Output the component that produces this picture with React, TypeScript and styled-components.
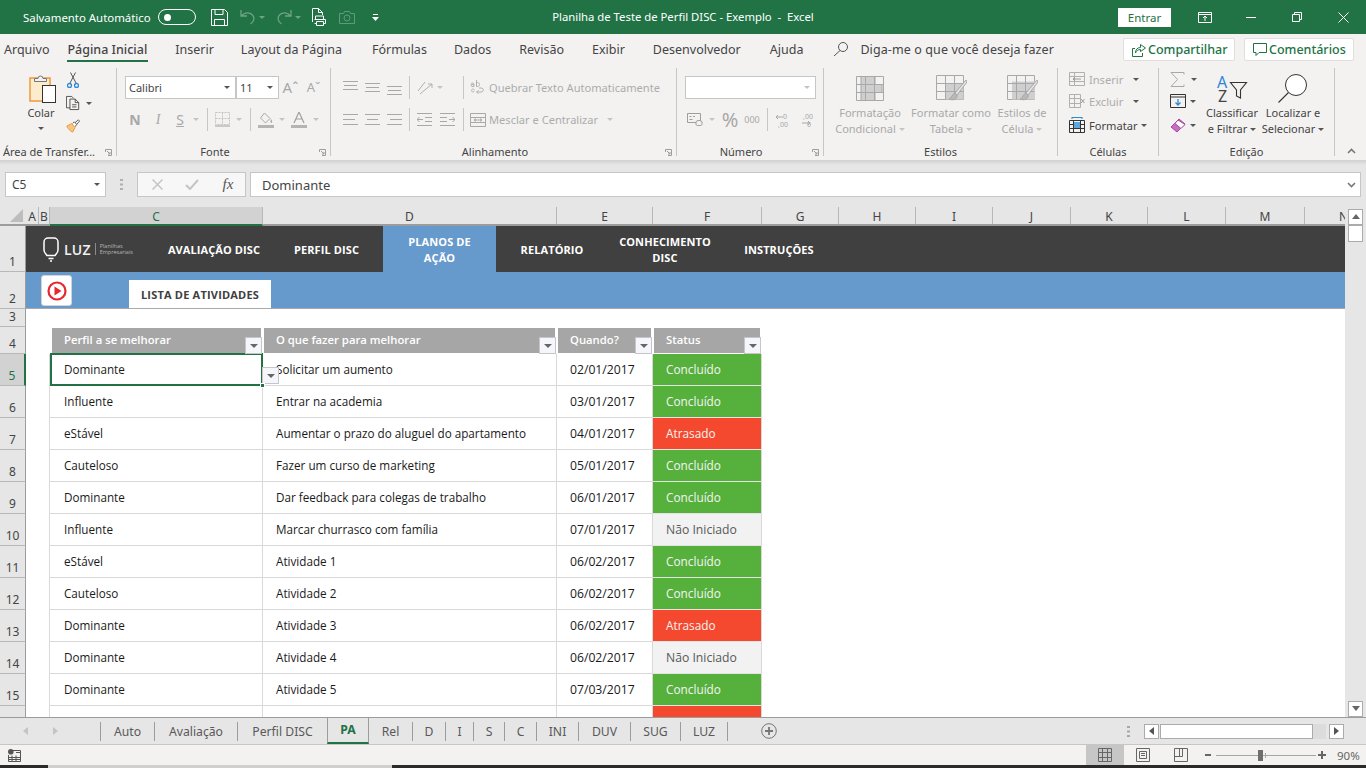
import * as React from "react";
import styled, { createGlobalStyle } from "styled-components";

const GREEN = "#217346";
const INK = "#444444";

const GlobalStyle = createGlobalStyle`
  html, body {
    margin: 0;
    height: 100%;
    overflow: hidden;
    background: #e6e6e6;
  }
  body {
    font-family: "Noto Sans", "Open Sans", sans-serif;
    color: ${INK};
  }
  * { box-sizing: border-box; }
`;

const Window = styled.div`
  width: 1366px;
  height: 768px;
  display: flex;
  flex-direction: column;
  overflow: hidden;
`;

/* title bar */
const TitleBar = styled.header`
  height: 34px;
  flex: none;
  background: ${GREEN};
  color: white;
  display: grid;
  grid-template-columns: 1fr auto 1fr;
  align-items: center;
`;

const QuickAccess = styled.div`
  display: flex;
  align-items: center;
  padding-left: 23px;
`;

const AutoSave = styled.span`
  font-size: 11.4px;
  width: 135px;
  white-space: nowrap;
`;

const Toggle = styled.span`
  width: 38px;
  height: 16px;
  border: 1px solid white;
  border-radius: 8px;
  margin-right: 15px;
  display: flex;
  align-items: center;
  padding-left: 5px;
  &::before {
    content: "";
    width: 7px;
    height: 7px;
    border-radius: 50%;
    background: white;
  }
`;

const Slot = styled.span<{ $w: number; $h?: number; $ml?: number }>`
  width: ${(p) => p.$w}px;
  height: ${(p) => (p.$h ? `${p.$h}px` : "auto")};
  margin-left: ${(p) => p.$ml ?? 0}px;
  flex: none;
  display: inline-flex;
  align-items: center;
  justify-content: center;
`;

const WindowTitle = styled.div`
  font-size: 11.3px;
  white-space: pre;
  position: relative;
  top: -1px;
`;

const WindowControls = styled.div`
  display: flex;
  align-items: center;
  justify-content: flex-end;
`;

const SignIn = styled.button`
  width: 53px;
  height: 19px;
  background: white;
  border: 0;
  padding: 0;
  color: ${GREEN};
  font: 11.5px "Noto Sans", sans-serif;
  margin-right: 18px;
`;

/* tabs */
const TabRow = styled.nav`
  height: 34px;
  flex: none;
  background: #f3f2f1;
  display: flex;
  align-items: center;
  padding-left: 4px;
  font-size: 12.5px;
`;

const RibbonTab = styled.span<{ $active?: boolean; $gap: number }>`
  height: 34px;
  margin-left: ${(p) => p.$gap}px;
  padding-bottom: 4px;
  display: flex;
  align-items: center;
  position: relative;
  white-space: nowrap;
  font-weight: ${(p) => (p.$active ? 500 : 400)};
  &::after {
    content: "";
    display: ${(p) => (p.$active ? "block" : "none")};
    position: absolute;
    left: 0;
    right: -1px;
    top: 26px;
    height: 2px;
    background: ${GREEN};
  }
`;

const TellMe = styled.span`
  height: 34px;
  padding-bottom: 4px;
  display: flex;
  align-items: center;
  margin-left: 30px;
  gap: 11px;
  white-space: nowrap;
  letter-spacing: 0.1px;
`;

const TabActions = styled.div`
  margin-left: auto;
  height: 34px;
  display: flex;
  gap: 9px;
  padding: 4px 12px 0 0;
`;

const ShareButton = styled.span<{ $w: number }>`
  width: ${(p) => p.$w}px;
  height: 23px;
  background: white;
  border: 1px solid #e1dfdd;
  border-radius: 2px;
  color: ${GREEN};
  font-size: 12.5px;
  font-weight: 500;
  display: flex;
  align-items: center;
  padding-left: 8px;
  white-space: nowrap;
`;

/* ribbon */
const Ribbon = styled.section`
  height: 92px;
  flex: none;
  background: #f3f2f1;
  display: flex;
  align-items: flex-start;
  position: relative;
`;

const RibbonShadow = styled.div`
  height: 5px;
  flex: none;
  background: linear-gradient(#d0d0d0, #e6e6e6);
`;

const Group = styled.div<{ $w: number }>`
  width: ${(p) => p.$w}px;
  height: 88px;
  flex: none;
  border-right: 1px solid #c8c6c4;
  display: flex;
  flex-direction: column;
  position: relative;
`;

const GroupBody = styled.div<{ $pad?: number; $row?: boolean }>`
  flex: 1;
  min-height: 0;
  padding-left: ${(p) => p.$pad ?? 0}px;
  display: flex;
  flex-direction: ${(p) => (p.$row ? "row" : "column")};
`;

const GroupLabel = styled.div<{ $inset?: number }>`
  height: 16px;
  line-height: 24px;
  font-size: 11px;
  text-align: center;
  white-space: nowrap;
  padding-right: ${(p) => p.$inset ?? 0}px;
`;

const Launcher = styled.span`
  position: absolute;
  right: 4px;
  bottom: 0;
  display: flex;
`;

const StackRows = styled.div`
  display: flex;
  flex-direction: column;
  padding-top: 8px;
  gap: 9px;
`;

const ToolRow = styled.div`
  height: 23px;
  display: flex;
  align-items: center;
`;

const ComboBox = styled.div<{ $w: number }>`
  width: ${(p) => p.$w}px;
  height: 23px;
  background: white;
  border: 1px solid #c6c6c6;
  font-size: 11px;
  display: flex;
  align-items: center;
  justify-content: space-between;
  padding: 0 5px 0 3px;
`;

const Caret = styled.span<{ $dim?: boolean; $ml?: number; $tone?: string }>`
  width: 0;
  height: 0;
  flex: none;
  margin-left: ${(p) => p.$ml ?? 0}px;
  border-left: 3.5px solid transparent;
  border-right: 3.5px solid transparent;
  border-top: 3.5px solid ${(p) => p.$tone ?? (p.$dim ? "#c4c4c4" : "#555")};
`;

const Divider = styled.span`
  width: 8px;
  height: 23px;
  flex: none;
  display: flex;
  justify-content: center;
  &::before {
    content: "";
    width: 1px;
    background: #c8c6c4;
  }
`;

const ToolText = styled.span<{ $dim?: boolean }>`
  font-size: 11.1px;
  color: ${(p) => (p.$dim ? "#acacac" : INK)};
  white-space: nowrap;
`;

const FontGlyph = styled.span<{ $w?: number; $italic?: boolean; $under?: boolean; $size?: number; $serif?: boolean; $tone?: string }>`
  font-family: ${(p) => (p.$serif ? '"Liberation Serif", serif' : '"Noto Sans", sans-serif')};
  font-size: ${(p) => p.$size ?? 13}px;
  font-weight: ${(p) => p.$w ?? 400};
  font-style: ${(p) => (p.$italic ? "italic" : "normal")};
  text-decoration: ${(p) => (p.$under ? "underline" : "none")};
  color: ${(p) => p.$tone ?? "#a8a8a8"};
  line-height: 1;
`;

const BigButton = styled.div<{ $w: number; $dim?: boolean; $ml?: number }>`
  width: ${(p) => p.$w}px;
  margin-left: ${(p) => p.$ml ?? 0}px;
  flex: none;
  display: flex;
  flex-direction: column;
  align-items: center;
  font-size: 11px;
  line-height: 16px;
  color: ${(p) => (p.$dim ? "#a9a9a9" : INK)};
  text-align: center;
  white-space: nowrap;
`;

const BigIcon = styled.div`
  height: 37px;
  padding-top: 4px;
  display: flex;
  align-items: center;
  justify-content: center;
`;

const LabelLine = styled.span`
  display: flex;
  align-items: center;
  gap: 3px;
`;

const CellRows = styled.div<{ $gap?: number; $top?: number; $w?: number }>`
  display: flex;
  flex-direction: column;
  flex: none;
  gap: ${(p) => p.$gap ?? 0}px;
  padding-top: ${(p) => p.$top ?? 0}px;
  width: ${(p) => (p.$w ? `${p.$w}px` : "auto")};
`;

const CellRow = styled.div<{ $mt?: number }>`
  height: 22px;
  margin-top: ${(p) => p.$mt ?? 0}px;
  display: flex;
  align-items: center;
  gap: 4px;
`;

const CollapseRibbon = styled.span`
  position: absolute;
  right: 10px;
  bottom: 6px;
  display: flex;
`;

/* formula bar */
const FormulaBar = styled.div`
  height: 42px;
  flex: none;
  background: #e6e6e6;
  padding: 7px 5px 0;
  display: flex;
  align-items: flex-start;
`;

const NameBox = styled.div`
  width: 101px;
  height: 25px;
  background: white;
  border: 1px solid #c6c6c6;
  padding: 0 5px 0 6px;
  font-size: 12px;
  display: flex;
  align-items: center;
  justify-content: space-between;
`;

const Grip = styled.span`
  width: 31px;
  height: 25px;
  display: flex;
  align-items: center;
  justify-content: center;
`;

const FormulaTools = styled.div`
  width: 109px;
  height: 25px;
  background: #f7f7f7;
  border: 1px solid #c6c6c6;
  display: flex;
  align-items: center;
  margin-right: 4px;
  padding-left: 8px;
`;

const FormulaInput = styled.div`
  width: 1111px;
  height: 25px;
  background: white;
  border: 1px solid #c6c6c6;
  font-size: 13px;
  display: flex;
  align-items: center;
  justify-content: space-between;
  padding: 0 4px 0 11px;
`;

/* grid */
const GridArea = styled.div`
  flex: 1;
  min-height: 0;
  display: flex;
  background: #e6e6e6;
`;

const GridMain = styled.div`
  width: 1345px;
  flex: none;
  display: flex;
  flex-direction: column;
  overflow: hidden;
`;

const ColumnHeaders = styled.div`
  height: 19px;
  flex: none;
  display: flex;
  border-bottom: 2px solid #9c9c9c;
`;

const Corner = styled.div`
  width: 26px;
  flex: none;
  display: flex;
  align-items: flex-end;
  justify-content: flex-end;
  padding: 0 3px 2px 0;
`;

const ColumnHeader = styled.div<{ $w: number; $active?: boolean }>`
  width: ${(p) => p.$w}px;
  flex: none;
  margin-bottom: ${(p) => (p.$active ? "-2px" : "0")};
  background: ${(p) => (p.$active ? "#d2d2d2" : "transparent")};
  border-bottom: ${(p) => (p.$active ? `2px solid ${GREEN}` : "0")};
  border-right: 1px solid #b8b8b8;
  padding-top: 1px;
  font-size: 12px;
  color: ${(p) => (p.$active ? GREEN : INK)};
  display: flex;
  align-items: center;
  justify-content: center;
  overflow: hidden;
`;

const GridBody = styled.div`
  flex: 1;
  min-height: 0;
  display: flex;
  overflow: hidden;
`;

const RowHeaders = styled.div`
  width: 26px;
  flex: none;
`;

const RowHeader = styled.div<{ $h: number; $active?: boolean }>`
  height: ${(p) => p.$h}px;
  background: ${(p) => (p.$active ? "#d2d2d2" : "#e6e6e6")};
  border-bottom: 1px solid #b8b8b8;
  border-right: ${(p) => (p.$active ? `2px solid ${GREEN}` : "1px solid #9c9c9c")};
  color: ${(p) => (p.$active ? GREEN : INK)};
  font-size: 12px;
  display: flex;
  align-items: flex-end;
  justify-content: center;
  padding-bottom: 1px;
`;

const Sheet = styled.div`
  flex: 1;
  min-width: 0;
  background: white;
  font-family: "Open Sans", "Noto Sans", sans-serif;
`;

const NavBar = styled.div`
  height: 46px;
  background: #404040;
  display: flex;
`;

const LogoCell = styled.div`
  width: 132px;
  flex: none;
  display: flex;
  align-items: center;
  padding-left: 17px;
  color: #f2f2f2;
`;

const LogoWord = styled.span`
  font-size: 14px;
  font-weight: 600;
  margin: 0 4px 0 5px;
  letter-spacing: 0.2px;
`;

const LogoTag = styled.span`
  border-left: 1px solid #8c8c8c;
  padding-left: 4px;
  font-size: 5.5px;
  line-height: 6px;
  color: #b5b5b5;
  white-space: nowrap;
`;

const NavItem = styled.div<{ $w: number; $active?: boolean }>`
  width: ${(p) => p.$w}px;
  flex: none;
  background: ${(p) => (p.$active ? "#6699cc" : "transparent")};
  color: white;
  font-size: 11px;
  font-weight: 700;
  letter-spacing: 0.1px;
  line-height: 16px;
  text-align: center;
  display: flex;
  align-items: center;
  justify-content: center;
  padding: 2px ${(p) => (p.$active ? 18 : 2)}px 0;
`;

const SubBar = styled.div`
  height: 37px;
  background: #6699cc;
  border-bottom: 1px solid #a9a9a9;
  display: flex;
  align-items: flex-end;
  padding-left: 15px;
`;

const PlayButton = styled.div`
  width: 31px;
  height: 31px;
  margin-bottom: 2px;
  background: white;
  border: 1px solid #d4d4d4;
  border-radius: 3px;
  display: flex;
  align-items: center;
  justify-content: center;
`;

const SubTab = styled.div`
  width: 142px;
  height: 28px;
  margin-left: 57px;
  background: white;
  color: #404040;
  font-size: 11px;
  font-weight: 700;
  letter-spacing: 0.2px;
  display: flex;
  align-items: center;
  justify-content: center;
`;

const SheetGap = styled.div`
  height: 18px;
`;

const TableGrid = styled.div`
  margin-left: 24px;
  display: grid;
  grid-template-columns: 213px 294px 96px 109px;
  width: 712px;
`;

const HeadCell = styled.div`
  height: 25px;
  position: relative;
  background: #a6a6a6;
  margin: 1px 2px 1px 1px;
  color: white;
  font-size: 11.3px;
  font-weight: 600;
  padding: 0 0 2px 12px;
  display: flex;
  align-items: center;
  &:first-child {
    margin-left: 2px;
  }
`;

const FilterButton = styled.span<{ $right: number; $bottom: number }>`
  position: absolute;
  right: ${(p) => p.$right}px;
  bottom: ${(p) => p.$bottom}px;
  width: 17px;
  height: 17px;
  background: #f4f6fb;
  border: 1px solid #c6c6c6;
  display: flex;
  align-items: center;
  justify-content: center;
  z-index: 3;
`;

const BodyCell = styled.div<{ $selected?: boolean; $date?: boolean }>`
  height: 32px;
  position: relative;
  border-right: 1px solid #d9d9d9;
  border-bottom: 1px solid #d9d9d9;
  font-size: ${(p) => (p.$date ? 12.2 : 11.7)}px;
  padding-left: 13px;
  padding-bottom: 1px;
  color: #1a1a1a;
  display: flex;
  align-items: center;
  white-space: nowrap;
  &::before {
    content: "";
    display: ${(p) => (p.$selected ? "block" : "none")};
    position: absolute;
    inset: -1px -1px -1px 0;
    border: 2px solid ${GREEN};
    z-index: 2;
  }
  &:nth-child(4n + 1) {
    padding-left: 14px;
    box-shadow: -1px 0 0 #d9d9d9;
  }
`;

const Handle = styled.span`
  position: absolute;
  right: -3px;
  bottom: -3px;
  width: 5px;
  height: 5px;
  background: ${GREEN};
  border: 1px solid white;
  z-index: 4;
`;

const tones = {
  done: { bg: "#55b03c", fg: "#f5f5f5", size: 11.8 },
  late: { bg: "#f4492e", fg: "#f5f5f5", size: 11.8 },
  idle: { bg: "#f2f2f2", fg: "#595959", size: 12.2 },
};

type Status = keyof typeof tones;

const StatusCell = styled(BodyCell)<{ $status: Status }>`
  background: ${(p) => tones[p.$status].bg};
  color: ${(p) => tones[p.$status].fg};
  font-size: ${(p) => tones[p.$status].size}px;
  border-bottom-color: #e4e4e4;
`;

/* vertical scrollbar */
const VScroll = styled.aside`
  width: 21px;
  flex: none;
  background: #e6e6e6;
  padding: 2px 0 0 3px;
  display: flex;
  flex-direction: column;
`;

const ScrollButton = styled.span`
  width: 15px;
  height: 16px;
  flex: none;
  background: white;
  border: 1px solid #ababab;
  display: flex;
  align-items: center;
  justify-content: center;
`;

const VThumb = styled.span`
  width: 15px;
  height: 17px;
  flex: none;
  background: white;
  border: 1px solid #ababab;
`;

const VTrack = styled.span`
  flex: 1;
  background: #e6e6e6;
`;

/* sheet tabs */
const SheetTabs = styled.div`
  height: 28px;
  flex: none;
  background: #e6e6e6;
  border-top: 1px solid #9c9c9c;
  border-bottom: 1px solid #c6c6c6;
  display: flex;
  align-items: center;
  font-size: 12.2px;
`;

const TabArrows = styled.div`
  width: 100px;
  flex: none;
  display: flex;
  align-items: center;
  padding-left: 22px;
  gap: 22px;
`;

const SheetTab = styled.div<{ $w: number; $active?: boolean }>`
  width: ${(p) => p.$w}px;
  flex: none;
  height: ${(p) => (p.$active ? "27px" : "19px")};
  margin-top: ${(p) => (p.$active ? "-1px" : "0")};
  margin-left: ${(p) => (p.$active ? "-1px" : "0")};
  border-left: ${(p) => (p.$active ? "1px solid #9c9c9c" : "0")};
  border-right: 1px solid #9c9c9c;
  border-bottom: ${(p) => (p.$active ? `2px solid ${GREEN}` : "0")};
  color: ${(p) => (p.$active ? GREEN : "#595959")};
  font-weight: ${(p) => (p.$active ? 700 : 400)};
  display: flex;
  align-items: center;
  justify-content: center;
`;

const FirstTabEdge = styled.span`
  width: 1px;
  height: 19px;
  flex: none;
  background: #9c9c9c;
`;

const AddSheet = styled.span`
  margin-left: 33px;
  display: flex;
`;

const HScrollArea = styled.div`
  margin-left: auto;
  display: flex;
  align-items: center;
  padding-right: 22px;
`;

const Dots = styled.span`
  margin-right: 14px;
  display: flex;
`;

const HButton = styled.span`
  width: 15px;
  height: 15px;
  background: white;
  border: 1px solid #ababab;
  display: flex;
  align-items: center;
  justify-content: center;
`;

const HThumb = styled.span`
  width: 153px;
  height: 15px;
  margin-left: 1px;
  background: white;
  border: 1px solid #ababab;
`;

const HTrack = styled.span`
  width: 13px;
  height: 15px;
  background: #dcdcdc;
  margin-right: 3px;
`;

/* status bar */
const StatusBar = styled.footer`
  height: 20px;
  flex: none;
  background: #f3f2f1;
  display: flex;
  align-items: center;
  padding-left: 8px;
`;

const StatusRight = styled.div`
  margin-left: auto;
  height: 20px;
  display: flex;
  align-items: center;
`;

const ViewButton = styled.span<{ $active?: boolean }>`
  width: 38px;
  height: 20px;
  background: ${(p) => (p.$active ? "#c6c6c6" : "transparent")};
  display: flex;
  align-items: center;
  justify-content: center;
`;

const ZoomSlider = styled.div`
  width: 100px;
  height: 1px;
  background: #a6a6a6;
  position: relative;
`;

const ZoomThumb = styled.span`
  position: absolute;
  left: 42px;
  top: -5px;
  width: 5px;
  height: 11px;
  background: #6e6e6e;
`;

const ZoomMark = styled.span`
  position: absolute;
  left: 49px;
  top: -2px;
  width: 1px;
  height: 5px;
  background: #a6a6a6;
`;

const ZoomText = styled.span`
  width: 38px;
  font-size: 11.5px;
  color: #666;
  padding-left: 9px;
`;

const TaskStrip = styled.div`
  height: 3px;
  flex: none;
  display: flex;
  background: #2a2a2a;
`;

const TaskGap = styled.span`
  width: 344px;
  margin-left: 48px;
  background: #cfcfcf;
`;

/* drawings */
const SaveIcon = () => (
  <svg width="17" height="17" viewBox="0 0 17 17" fill="none" stroke="white">
    <path d="M.5.500h13l3 3v13H.5z" />
    <path d="M4 .5v5h8v-5M3.500 16.500v-6h10v6" />
  </svg>
);

const UndoIcon = ({ flip }: { flip?: boolean }) => (
  <svg width="16" height="16" viewBox="0 0 16 16" fill="none" stroke="#6fa387" strokeWidth="1.3" style={flip ? { transform: "scaleX(-1)" } : undefined}>
    <path d="M1 1v6h6M1.500 7c3-4 8-4 11-1 3 3 1 7-2 9" />
  </svg>
);

const PrintIcon = () => (
  <svg width="16" height="18" viewBox="0 0 16 18" fill="none" stroke="white">
    <path d="M1.500 14V.5h6l4 4V7M7.500.5v4h4" />
    <path d="M4.500 11V8h8v3M3.500 11.500h11v4h-2M3.500 15.500h2" />
    <path d="M5.500 13.500h7v4h-7z" />
  </svg>
);

const CameraIcon = () => (
  <svg width="16" height="13" viewBox="0 0 16 13" fill="none" stroke="#5e9a7c">
    <path d="M.5 2.500h4l1-2h5l1 2h4v10H.5z" />
    <circle cx="8" cy="7" r="3" />
  </svg>
);

const CustomizeIcon = () => (
  <svg width="7" height="7" viewBox="0 0 7 7" fill="white">
    <path d="M1 0h5v1H1zM0 3h7L3.500 7z" />
  </svg>
);

const DisplayIcon = () => (
  <svg width="14" height="11" viewBox="0 0 14 11" fill="none" stroke="white">
    <path d="M.5.500h13v10H.5zM.5 2.500h13M7 9V4.500M5 6l2-2 2 2" />
  </svg>
);

const MinIcon = () => (
  <svg width="10" height="10" viewBox="0 0 10 10" stroke="white"><path d="M0 5.500h10" /></svg>
);

const RestoreIcon = () => (
  <svg width="10" height="10" viewBox="0 0 10 10" fill="none" stroke="white">
    <path d="M.5 2.500h7v7h-7zM2.500 2.500v-2h7v7h-2" />
  </svg>
);

const CloseIcon = () => (
  <svg width="11" height="11" viewBox="0 0 11 11" stroke="white"><path d="M.5.500l10 10M10.500.500l-10 10" /></svg>
);

const SearchSmall = () => (
  <svg width="16" height="16" viewBox="0 0 16 16" fill="none" stroke="#555">
    <circle cx="10" cy="6" r="4.500" />
    <path d="M7 9.500 1 15" />
  </svg>
);

const ShareIcon = () => (
  <svg width="16" height="14" viewBox="0 0 16 14" fill="none" stroke={GREEN}>
    <path d="M3 5.500H.5v8h10V10M8.500 1.500l5 3.500-5 3.500V6.500C6 6.500 4 8 3.500 10c0-3.500 2-5.500 5-5.500z" />
  </svg>
);

const CommentIcon = () => (
  <svg width="16" height="13" viewBox="0 0 16 13" fill="none" stroke={GREEN}>
    <path d="M.5.500h13v9H6l-3 3v-3H.5z" />
  </svg>
);

const PasteIcon = () => (
  <svg width="32" height="31" viewBox="-4 0 32 31" fill="none">
    <rect x="1" y="5" width="20" height="23" fill="#fdebcd" stroke="#ed9a3c" strokeWidth="1.500" />
    <path d="M5.500 8.500v-3h3.500a2.500 2.500 0 0 1 5 0h3.500v3z" fill="#f3f2f1" stroke="#777" />
    <rect x="13.500" y="12.500" width="13" height="17" fill="white" stroke="#333" />
  </svg>
);

const ScissorsIcon = () => (
  <svg width="12" height="16" viewBox="0 0 12 16" fill="none">
    <path d="M3 11 8.500.5M9 11 3.500.5" stroke="#555" />
    <circle cx="2.500" cy="13.500" r="2" stroke="#2b88d8" strokeWidth="1.300" />
    <circle cx="9.500" cy="13.500" r="2" stroke="#2b88d8" strokeWidth="1.300" />
  </svg>
);

const CopyIcon = () => (
  <svg width="16" height="16" viewBox="0 0 16 16" fill="none" stroke="#444">
    <path d="M4.500 13.500h-4V.5h6l2 2" />
    <path d="M4.500 3.500h6l4 4v8h-10zM10.500 3.500v4h4M7 10h5M7 12.500h5" />
  </svg>
);

const BrushIcon = () => (
  <svg width="17" height="16" viewBox="0 0 17 16" fill="none">
    <path d="M1 8l6-3 4 5-3 5.500C5 14 2 11 1 8z" fill="#f8c57f" stroke="#e8912f" />
    <path d="M8 5l2-2 3 3-2 3M11 4l4-3.500 1.500 1.500-3.500 4" fill="white" stroke="#444" />
  </svg>
);

const LauncherIcon = () => (
  <svg width="7" height="7" viewBox="0 0 7 7" fill="none" stroke="#9e9e9e">
    <path d="M.5 3V.5h6v6H3M2 2l3 3M5 3v2H3" />
  </svg>
);

const Lines = ({ rows }: { rows: [number, number][] }) => (
  <svg width="15" height="14" viewBox="0 0 15 14" stroke="#a8a8a8">
    {rows.map(([x, w], i) => (
      <path key={i} d={`M${x} ${1.5 + i * 5}h${w}`} />
    ))}
  </svg>
);

const VAlign = ({ y }: { y: number }) => (
  <svg width="15" height="16" viewBox="0 0 15 16" stroke="#a8a8a8">
    <path d={`M0 ${y + 0.5}h15M1 ${y + 4.5}h13M0 ${y + 8.5}h15`} />
  </svg>
);

const OrientIcon = () => (
  <svg width="16" height="14" viewBox="0 0 16 14" fill="none" stroke="#b0b0b0">
    <path d="M1 10 8 1M3 13 15 3M15 3h-4M15 3v4" />
  </svg>
);

const IndentIcon = ({ flip }: { flip?: boolean }) => (
  <svg width="15" height="13" viewBox="0 0 15 13" fill="none" stroke="#a8a8a8" style={flip ? { transform: "scaleX(-1)" } : undefined}>
    <path d="M0 .5h15M8 4.500h7M8 8.500h7M0 12.500h15M6 6.500H0M2.500 4 0 6.500 2.500 9" />
  </svg>
);

const WrapIcon = () => (
  <svg width="16" height="15" viewBox="0 0 16 15" fill="none" stroke="#b0b0b0">
    <path d="M1 4.500c0-2 3-2 3 0v2H2c-1 0-1-2 0-2h2M6.500 0v6.500c2 0 3-.5 3-2s-1-2-3-2M4.500 10c-1-1.500-3-1-3 .5s2 2 3 .5M7 12h4c3 0 3-4 0-4H9M8.500 10.500 6.500 12l2 1.500" />
  </svg>
);

const MergeIcon = () => (
  <svg width="16" height="14" viewBox="0 0 16 14" fill="none" stroke="#a8a8a8">
    <path d="M.5.500h15v13H.5zM.5 4.500h15M.5 9.500h15M4 7h8M6 5.500 4 7l2 1.500M10 5.500 12 7l-2 1.500" />
  </svg>
);

const BordersIcon = () => (
  <svg width="15" height="15" viewBox="0 0 15 15" fill="none" stroke="#c4c4c4">
    <path d="M.5.500h14v12H.5zM.5 6.500h14M7.500.5v12" strokeDasharray="2 1" />
    <path d="M0 14h15" stroke="#a0a0a0" />
  </svg>
);

const FillIcon = () => (
  <svg width="16" height="16" viewBox="0 0 16 16" fill="none">
    <path d="M6.500 1 12 6.500 7.500 11 2.500 6z" stroke="#a8a8a8" />
    <path d="M13 7c1 2 2 3 .5 4-1 0-1.500-2-.5-4z" fill="#a8a8a8" />
    <rect x="0" y="13" width="16" height="3" fill="#b4b4b4" />
  </svg>
);

const FontColorIcon = () => (
  <svg width="16" height="16" viewBox="0 0 16 16" fill="none">
    <path d="M3 11 8 0l5 11M5 7h6" stroke="#a0a0a0" strokeWidth="1.200" />
    <rect x="0" y="13" width="16" height="3" fill="#b4b4b4" />
  </svg>
);

const AccountingIcon = () => (
  <svg width="16" height="13" viewBox="0 0 16 13" fill="none" stroke="#9e9e9e">
    <path d="M.5.500h13v9H.5zM2.500 3.500h2M6 3.500h2M2.500 6.500h3" />
    <ellipse cx="12" cy="9" rx="3" ry="1.500" fill="#f3f2f1" />
    <path d="M9 9v2.500c0 1.500 6 1.500 6 0V9" fill="#f3f2f1" />
  </svg>
);

const DecimalIcon = ({ more }: { more?: boolean }) => (
  <svg width="15" height="16" viewBox="0 0 15 16" fill="none" stroke="#a8a8a8">
    <path d={more ? "M1 5h7M3 3 1 5l2 2" : "M4 11h8M10 9l2 2-2 2"} />
    <text x={more ? 8 : 5} y="7" fontSize="7" fill="#a8a8a8" stroke="none" fontFamily="Noto Sans">{more ? "0" : ",00"}</text>
    <text x={more ? 3 : 9} y="15" fontSize="7" fill="#a8a8a8" stroke="none" fontFamily="Noto Sans">{more ? ",00" : "0"}</text>
  </svg>
);

const CondFormatIcon = () => (
  <svg width="28" height="25" viewBox="0 0 28 25" fill="none" stroke="#a8a8a8">
    <path d="M.5.500h27v24H.5z" />
    <path d="M5 .5h14v8h7v8h-7v8H5z" fill="#cfcfcf" />
    <path d="M.5 8.500h27M.5 16.500h27M9.500.5v24M18.500.5v24" />
  </svg>
);

const TableIcon = ({ full }: { full?: boolean }) => (
  <svg width="31" height="27" viewBox="0 0 31 27" fill="none" stroke="#a8a8a8">
    <path d="M.5.500h27v24H.5z" />
    <path d={full ? "M5 6.500h23v18H5z" : "M9.500 8.500h18v16h-18z"} fill="#cfcfcf" stroke="none" />
    <path d="M.5 8.500h27M.5 16.500h27M9.500.5v24M18.500.5v24" />
    <path d="M30 5 19 18l2 2L31 7z" fill="#e4e4e4" />
    <path d="M19 18c-3 1-3 5-6 6 4 2 9 0 8-4z" fill="#b8b8b8" />
  </svg>
);

const InsertCellsIcon = () => (
  <svg width="16" height="14" viewBox="0 0 16 14" fill="none" stroke="#b0b0b0">
    <path d="M.5.500h15v13H.5zM.5 4.500h15M.5 9.500h15M5.500.5v13" />
    <path d="M12 7H4M6 5 4 7l2 2" stroke="#9a9a9a" />
  </svg>
);

const DeleteCellsIcon = () => (
  <svg width="16" height="14" viewBox="0 0 16 14" fill="none" stroke="#b0b0b0">
    <path d="M.5.500h11v13H.5zM.5 4.500h11M.5 9.500h11M5.500.5v13" />
    <path d="M12 5l3.500 4M15.500 5 12 9" stroke="#9a9a9a" />
  </svg>
);

const FormatCellsIcon = () => (
  <svg width="16" height="16" viewBox="0 0 16 16" fill="none" stroke="#333">
    <path d="M3 .5h10M3 0v2M13 0v2" stroke="#2b88d8" />
    <path d="M.5 3.500h15v12H.5zM.5 7.500h15M.5 11.500h15M4.500 3.500v12M11.500 3.500v12" />
    <rect x="5" y="5" width="6" height="6" fill="#5ba7e0" stroke="none" />
  </svg>
);

const SumIcon = () => (
  <svg width="15" height="15" viewBox="0 0 15 15" fill="none" stroke="#a8a8a8">
    <path d="M14 2.500V.5H1l6.500 7L1 14.500h13v-2" />
  </svg>
);

const FillDownIcon = () => (
  <svg width="16" height="14" viewBox="0 0 16 14" fill="none" stroke="#333">
    <path d="M.5.500h15v13H.5zM.5 3h15" />
    <path d="M8 5v6M5.500 8.500 8 11l2.500-2.500" stroke="#2b88d8" strokeWidth="1.300" />
  </svg>
);

const EraserIcon = () => (
  <svg width="16" height="15" viewBox="0 0 16 15" fill="none">
    <path d="M1 9 9 1l6 5-8 8z" fill="#c86bc4" stroke="#a14aa0" />
    <path d="M8 2l7 4.500-4 4-6-5z" fill="white" stroke="#a14aa0" />
  </svg>
);

const SortFilterIcon = () => (
  <svg width="31" height="29" viewBox="0 0 31 29" fill="none" style={{ overflow: "visible" }}>
    <text x="0" y="14" fontSize="16" fill="#2b88d8" fontFamily="Noto Sans">A</text>
    <text x="1" y="28" fontSize="16" fill="#444" fontFamily="Noto Sans">Z</text>
    <path d="M13.500 8.500h16l-6 7.500v8l-4-2v-6z" stroke="#333" strokeWidth="1.100" />
  </svg>
);

const FindIcon = () => (
  <svg width="30" height="29" viewBox="0 0 30 29" fill="none" stroke="#333">
    <circle cx="18" cy="11" r="10.500" fill="white" />
    <path d="M10.500 18.500.5 28.500" strokeWidth="1.100" />
  </svg>
);

const Chevron = ({ up }: { up?: boolean }) => (
  <svg width="9" height="6" viewBox="0 0 9 6" fill="none" stroke="#777" strokeWidth="1.600" style={up ? { transform: "rotate(180deg)" } : undefined}>
    <path d="M1 1l3.500 3.500L8 1" />
  </svg>
);

const XIcon = () => (
  <svg width="11" height="11" viewBox="0 0 11 11" stroke="#c4c4c4" strokeWidth="1.500"><path d="M.5.500l10 10M10.500.500l-10 10" /></svg>
);

const CheckIcon = () => (
  <svg width="14" height="11" viewBox="0 0 14 11" fill="none" stroke="#c4c4c4" strokeWidth="2"><path d="M1 6l4 4 8-9" /></svg>
);

const GripDots = ({ color }: { color: string }) => (
  <svg width="3" height="11" viewBox="0 0 3 11" fill={color}>
    <rect y="0" width="3" height="2" />
    <rect y="4.500" width="3" height="2" />
    <rect y="9" width="3" height="2" />
  </svg>
);

const BulbIcon = () => (
  <svg width="16" height="25" viewBox="0 0 16 25" fill="none" stroke="white" strokeWidth="1.500">
    <path d="M5 1h6a4 4 0 0 1 4 4v8c0 3-2 4-3 5.500H4C3 17 1 16 1 13V5a4 4 0 0 1 4-4z" />
    <path d="M5.500 21.500h5M7 24h2" />
  </svg>
);

const PlayIcon = () => (
  <svg width="20" height="20" viewBox="0 0 20 20" fill="none">
    <circle cx="10" cy="10" r="8.500" stroke="#e8262c" strokeWidth="2.200" />
    <path d="M7.500 5.500v9l7-4.500z" fill="#e8262c" />
  </svg>
);

const SmallDown = () => (
  <svg width="8" height="4" viewBox="0 0 8 4" fill="#666"><path d="M0 0h8L4 4z" /></svg>
);

const Arrow = ({ dir, color }: { dir: "l" | "r" | "u" | "d"; color: string }) => {
  const d = { l: "M6 0v8L1 4z", r: "M1 0v8l5-4z", u: "M0 6h8L4 1z", d: "M0 1h8L4 6z" }[dir];
  return (
    <svg width="8" height="8" viewBox="0 0 8 8" fill={color}><path d={d} /></svg>
  );
};

const CornerMark = () => (
  <svg width="13" height="13" viewBox="0 0 13 13" fill="#bdbdbd"><path d="M13 0v13H0z" /></svg>
);

const AddSheetIcon = () => (
  <svg width="16" height="16" viewBox="0 0 16 16" fill="none" stroke="#757575">
    <circle cx="8" cy="8" r="7.300" />
    <path d="M4 8h8M8 4v8" strokeWidth="1.800" />
  </svg>
);

const MacroIcon = () => (
  <svg width="13" height="13" viewBox="0 0 13 13" fill="none" stroke="#555">
    <path d="M5 1.500h7.500v11H.5V6M.5 8.500h12M.5 10.500h12M4 6.500v6M8 6.500v6M8 3.500h4.500" />
    <circle cx="2.800" cy="2.800" r="2.800" fill="#555" stroke="none" />
  </svg>
);

const NormalViewIcon = () => (
  <svg width="14" height="14" viewBox="0 0 14 14" fill="none" stroke="#666">
    <path d="M.5.500h13v13H.5zM.5 4.500h13M.5 9.500h13M4.500.5v13M9.500.5v13" />
  </svg>
);

const PageViewIcon = () => (
  <svg width="14" height="14" viewBox="0 0 14 14" fill="none" stroke="#666">
    <path d="M.5.500h13v13H.5zM3.500 3.500h7v7h-7zM5 5.500h4M5 7.500h4" />
  </svg>
);

const BreakViewIcon = () => (
  <svg width="14" height="14" viewBox="0 0 14 14" fill="none" stroke="#666">
    <path d="M.5.500h13v13H.5zM.5 8.500h8M5.500.5v8M8.500.5v8" />
  </svg>
);

const ZoomMinus = () => (
  <svg width="6" height="2" viewBox="0 0 6 2" fill="#666"><rect width="6" height="2" /></svg>
);

const ZoomPlus = () => (
  <svg width="8" height="8" viewBox="0 0 8 8" fill="#666"><path d="M3 0h2v3h3v2H5v3H3V5H0V3h3z" /></svg>
);

const tabs = [
  { label: "Arquivo", gap: 0 },
  { label: "Página Inicial", gap: 18, active: true },
  { label: "Inserir", gap: 28 },
  { label: "Layout da Página", gap: 27 },
  { label: "Fórmulas", gap: 30 },
  { label: "Dados", gap: 27 },
  { label: "Revisão", gap: 28 },
  { label: "Exibir", gap: 28 },
  { label: "Desenvolvedor", gap: 28 },
  { label: "Ajuda", gap: 29 },
];

const columns = [
  { name: "A", w: 13 },
  { name: "B", w: 11 },
  { name: "C", w: 213, active: true },
  { name: "D", w: 294 },
  { name: "E", w: 96 },
  { name: "F", w: 109 },
  { name: "G", w: 77 },
  { name: "H", w: 77 },
  { name: "I", w: 77 },
  { name: "J", w: 78 },
  { name: "K", w: 77 },
  { name: "L", w: 78 },
  { name: "M", w: 79 },
  { name: "N", w: 78 },
];

const rowHeights = [46, 37, 18, 27, 32, 32, 32, 32, 32, 32, 32, 32, 32, 32, 32, 32];

const navItems = [
  { label: "AVALIAÇÃO DISC", w: 112 },
  { label: "PERFIL DISC", w: 113 },
  { label: "PLANOS DE AÇÃO", w: 113, active: true },
  { label: "RELATÓRIO", w: 112 },
  { label: "CONHECIMENTO DISC", w: 114 },
  { label: "INSTRUÇÕES", w: 114 },
];

const heads = ["Perfil a se melhorar", "O que fazer para melhorar", "Quando?", "Status"];

const rows: { profile: string; todo: string; date: string; status: Status; text: string }[] = [
  { profile: "Dominante", todo: "Solicitar um aumento", date: "02/01/2017", status: "done", text: "Concluído" },
  { profile: "Influente", todo: "Entrar na academia", date: "03/01/2017", status: "done", text: "Concluído" },
  { profile: "eStável", todo: "Aumentar o prazo do aluguel do apartamento", date: "04/01/2017", status: "late", text: "Atrasado" },
  { profile: "Cauteloso", todo: "Fazer um curso de marketing", date: "05/01/2017", status: "done", text: "Concluído" },
  { profile: "Dominante", todo: "Dar feedback para colegas de trabalho", date: "06/01/2017", status: "done", text: "Concluído" },
  { profile: "Influente", todo: "Marcar churrasco com família", date: "07/01/2017", status: "idle", text: "Não Iniciado" },
  { profile: "eStável", todo: "Atividade 1", date: "06/02/2017", status: "done", text: "Concluído" },
  { profile: "Cauteloso", todo: "Atividade 2", date: "06/02/2017", status: "done", text: "Concluído" },
  { profile: "Dominante", todo: "Atividade 3", date: "06/02/2017", status: "late", text: "Atrasado" },
  { profile: "Dominante", todo: "Atividade 4", date: "06/02/2017", status: "idle", text: "Não Iniciado" },
  { profile: "Dominante", todo: "Atividade 5", date: "07/03/2017", status: "done", text: "Concluído" },
  { profile: "", todo: "", date: "", status: "late", text: "" },
];

const sheetTabs = [
  { label: "Auto", w: 54 },
  { label: "Avaliação", w: 83 },
  { label: "Perfil DISC", w: 90 },
  { label: "PA", w: 42, active: true },
  { label: "Rel", w: 44 },
  { label: "D", w: 33 },
  { label: "I", w: 28 },
  { label: "S", w: 31 },
  { label: "C", w: 32 },
  { label: "INI", w: 42 },
  { label: "DUV", w: 52 },
  { label: "SUG", w: 50 },
  { label: "LUZ", w: 47 },
];

const QAT_DIM = "#6fa387";

const App = () => (
  <Window>
    <GlobalStyle />
    <TitleBar>
      <QuickAccess>
        <AutoSave>Salvamento Automático</AutoSave>
        <Toggle />
        <SaveIcon />
        <Slot $w={16} $ml={12}><UndoIcon /></Slot>
        <Slot $w={12}><Caret $tone={QAT_DIM} /></Slot>
        <Slot $w={16} $ml={8}><UndoIcon flip /></Slot>
        <Slot $w={12}><Caret $tone={QAT_DIM} /></Slot>
        <Slot $w={30}><PrintIcon /></Slot>
        <Slot $w={26}><CameraIcon /></Slot>
        <Slot $w={30}><CustomizeIcon /></Slot>
      </QuickAccess>
      <WindowTitle>Planilha de Teste de Perfil DISC - Exemplo  -  Excel</WindowTitle>
      <WindowControls>
        <SignIn>Entrar</SignIn>
        <Slot $w={32}><DisplayIcon /></Slot>
        <Slot $w={46} $ml={7}><MinIcon /></Slot>
        <Slot $w={46}><RestoreIcon /></Slot>
        <Slot $w={46}><CloseIcon /></Slot>
      </WindowControls>
    </TitleBar>

    <TabRow>
      {tabs.map((t) => (
        <RibbonTab key={t.label} $gap={t.gap} $active={t.active}>{t.label}</RibbonTab>
      ))}
      <TellMe><SearchSmall />Diga-me o que você deseja fazer</TellMe>
      <TabActions>
        <ShareButton $w={112}><ShareIcon />Compartilhar</ShareButton>
        <ShareButton $w={110}><CommentIcon />Comentários</ShareButton>
      </TabActions>
    </TabRow>

    <Ribbon>
      <Group $w={117}>
        <GroupBody $row>
          <BigButton $w={50} $ml={16}>
            <BigIcon><PasteIcon /></BigIcon>
            Colar
            <Slot $w={50} $h={14}><Caret /></Slot>
          </BigButton>
          <CellRows $gap={1} $top={1}>
            <CellRow><Slot $w={14}><ScissorsIcon /></Slot></CellRow>
            <CellRow><Slot $w={14}><CopyIcon /></Slot><Caret $ml={2} /></CellRow>
            <CellRow><Slot $w={14}><BrushIcon /></Slot></CellRow>
          </CellRows>
        </GroupBody>
        <GroupLabel $inset={18}>Área de Transfer...</GroupLabel>
        <Launcher><LauncherIcon /></Launcher>
      </Group>

      <Group $w={214}>
        <GroupBody $pad={8}>
          <StackRows>
            <ToolRow>
              <ComboBox $w={111}>Calibri<Caret /></ComboBox>
              <ComboBox $w={43}>11<Caret /></ComboBox>
              <Slot $w={23}><FontGlyph $size={15}>Aˆ</FontGlyph></Slot>
              <Slot $w={23}><FontGlyph $size={13}>Aˇ</FontGlyph></Slot>
            </ToolRow>
            <ToolRow>
              <Slot $w={20}><FontGlyph $w={700} $size={14}>N</FontGlyph></Slot>
              <Slot $w={26}><FontGlyph $italic $size={14} $serif>I</FontGlyph></Slot>
              <Slot $w={18}><FontGlyph $under $size={14}>S</FontGlyph></Slot>
              <Slot $w={14}><Caret $dim /></Slot>
              <Divider />
              <Slot $w={23}><BordersIcon /></Slot>
              <Slot $w={10}><Caret $dim /></Slot>
              <Slot $w={2} />
              <Divider />
              <Slot $w={23}><FillIcon /></Slot>
              <Slot $w={10}><Caret $dim /></Slot>
              <Slot $w={24}><FontColorIcon /></Slot>
              <Slot $w={10}><Caret $dim /></Slot>
            </ToolRow>
          </StackRows>
        </GroupBody>
        <GroupLabel $inset={17}>Fonte</GroupLabel>
        <Launcher><LauncherIcon /></Launcher>
      </Group>

      <Group $w={346}>
        <GroupBody $pad={8}>
          <StackRows>
            <ToolRow>
              <Slot $w={22}><VAlign y={1} /></Slot>
              <Slot $w={22}><VAlign y={3} /></Slot>
              <Slot $w={22}><VAlign y={6} /></Slot>
              <Divider />
              <Slot $w={23}><OrientIcon /></Slot>
              <Slot $w={8}><Caret $dim /></Slot>
              <Slot $w={15} />
              <Divider />
              <Slot $w={22}><WrapIcon /></Slot>
              <ToolText $dim>Quebrar Texto Automaticamente</ToolText>
            </ToolRow>
            <ToolRow>
              <Slot $w={22}><Lines rows={[[0, 15], [0, 12], [0, 15]]} /></Slot>
              <Slot $w={22}><Lines rows={[[0, 15], [2, 11], [0, 15]]} /></Slot>
              <Slot $w={22}><Lines rows={[[0, 15], [3, 12], [0, 15]]} /></Slot>
              <Divider />
              <Slot $w={23}><IndentIcon /></Slot>
              <Slot $w={23}><IndentIcon flip /></Slot>
              <Divider />
              <Slot $w={22}><MergeIcon /></Slot>
              <ToolText $dim>Mesclar e Centralizar</ToolText>
              <Caret $dim $ml={9} />
            </ToolRow>
          </StackRows>
        </GroupBody>
        <GroupLabel $inset={17}>Alinhamento</GroupLabel>
        <Launcher><LauncherIcon /></Launcher>
      </Group>

      <Group $w={147}>
        <GroupBody $pad={8}>
          <StackRows>
            <ToolRow><ComboBox $w={131}><span /><Caret $dim /></ComboBox></ToolRow>
            <ToolRow>
              <Slot $w={20}><AccountingIcon /></Slot>
              <Slot $w={14}><Caret $dim /></Slot>
              <Slot $w={22}><FontGlyph $size={20}>%</FontGlyph></Slot>
              <Slot $w={22}><FontGlyph $size={9}>000</FontGlyph></Slot>
              <Divider />
              <Slot $w={22}><DecimalIcon more /></Slot>
              <Slot $w={24}><DecimalIcon /></Slot>
            </ToolRow>
          </StackRows>
        </GroupBody>
        <GroupLabel $inset={18}>Número</GroupLabel>
        <Launcher><LauncherIcon /></Launcher>
      </Group>

      <Group $w={234}>
        <GroupBody $pad={6} $row>
          <BigButton $w={80} $dim>
            <BigIcon><CondFormatIcon /></BigIcon>
            Formatação
            <LabelLine>Condicional<Caret $dim /></LabelLine>
          </BigButton>
          <BigButton $w={82} $dim>
            <BigIcon><TableIcon /></BigIcon>
            Formatar como
            <LabelLine>Tabela<Caret $dim /></LabelLine>
          </BigButton>
          <BigButton $w={60} $dim>
            <BigIcon><TableIcon full /></BigIcon>
            Estilos de
            <LabelLine>Célula<Caret $dim /></LabelLine>
          </BigButton>
        </GroupBody>
        <GroupLabel>Estilos</GroupLabel>
      </Group>

      <Group $w={101}>
        <GroupBody $pad={11}>
          <CellRows>
            <CellRow><InsertCellsIcon /><ToolText $dim>Inserir</ToolText><Caret $ml={6} /></CellRow>
            <CellRow><DeleteCellsIcon /><ToolText $dim>Excluir</ToolText><Caret $ml={6} /></CellRow>
            <CellRow $mt={2}><FormatCellsIcon /><ToolText>Formatar</ToolText><Caret /></CellRow>
          </CellRows>
        </GroupBody>
        <GroupLabel>Células</GroupLabel>
      </Group>

      <Group $w={176}>
        <GroupBody $pad={11} $row>
          <CellRows $w={34}>
            <CellRow><SumIcon /><Caret $ml={2} /></CellRow>
            <CellRow><FillDownIcon /><Caret /></CellRow>
            <CellRow $mt={2}><EraserIcon /><Caret /></CellRow>
          </CellRows>
          <BigButton $w={56}>
            <BigIcon><SortFilterIcon /></BigIcon>
            Classificar
            <LabelLine>e Filtrar<Caret /></LabelLine>
          </BigButton>
          <BigButton $w={66}>
            <BigIcon><FindIcon /></BigIcon>
            Localizar e
            <LabelLine>Selecionar<Caret /></LabelLine>
          </BigButton>
        </GroupBody>
        <GroupLabel>Edição</GroupLabel>
      </Group>
      <CollapseRibbon><Chevron up /></CollapseRibbon>
    </Ribbon>
    <RibbonShadow />

    <FormulaBar>
      <NameBox>C5<Caret /></NameBox>
      <Grip><GripDots color="#b0b0b0" /></Grip>
      <FormulaTools>
        <Slot $w={22}><XIcon /></Slot>
        <Slot $w={48}><CheckIcon /></Slot>
        <Slot $w={24}><FontGlyph $italic $serif $size={15} $tone="#555">fx</FontGlyph></Slot>
      </FormulaTools>
      <FormulaInput>Dominante<Chevron /></FormulaInput>
    </FormulaBar>

    <GridArea>
      <GridMain>
        <ColumnHeaders>
          <Corner><CornerMark /></Corner>
          {columns.map((c) => (
            <ColumnHeader key={c.name} $w={c.w} $active={c.active}>{c.name}</ColumnHeader>
          ))}
        </ColumnHeaders>
        <GridBody>
          <RowHeaders>
            {rowHeights.map((h, i) => (
              <RowHeader key={i} $h={h} $active={i === 4}>{i < 15 ? i + 1 : ""}</RowHeader>
            ))}
          </RowHeaders>
          <Sheet>
            <NavBar>
              <LogoCell>
                <BulbIcon />
                <LogoWord>LUZ</LogoWord>
                <LogoTag>Planilhas<br />Empresariais</LogoTag>
              </LogoCell>
              {navItems.map((n) => (
                <NavItem key={n.label} $w={n.w} $active={n.active}>{n.label}</NavItem>
              ))}
            </NavBar>
            <SubBar>
              <PlayButton><PlayIcon /></PlayButton>
              <SubTab>LISTA DE ATIVIDADES</SubTab>
            </SubBar>
            <SheetGap />
            <TableGrid>
              {heads.map((h) => (
                <HeadCell key={h}>
                  {h}
                  <FilterButton $right={-1} $bottom={-1}><SmallDown /></FilterButton>
                </HeadCell>
              ))}
              {rows.map((r, i) => (
                <React.Fragment key={i}>
                  <BodyCell $selected={i === 0}>
                    {r.profile}
                    {i === 0 && <Handle />}
                    {i === 0 && <FilterButton $right={-17} $bottom={1}><SmallDown /></FilterButton>}
                  </BodyCell>
                  <BodyCell>{r.todo}</BodyCell>
                  <BodyCell $date>{r.date}</BodyCell>
                  <StatusCell $status={r.status}>{r.text}</StatusCell>
                </React.Fragment>
              ))}
            </TableGrid>
          </Sheet>
        </GridBody>
      </GridMain>
      <VScroll>
        <ScrollButton><Arrow dir="u" color="#666" /></ScrollButton>
        <VThumb />
        <VTrack />
        <ScrollButton><Arrow dir="d" color="#666" /></ScrollButton>
      </VScroll>
    </GridArea>

    <SheetTabs>
      <TabArrows>
        <Arrow dir="l" color="#c4c4c4" />
        <Arrow dir="r" color="#c4c4c4" />
      </TabArrows>
      <FirstTabEdge />
      {sheetTabs.map((t) => (
        <SheetTab key={t.label} $w={t.w} $active={t.active}>{t.label}</SheetTab>
      ))}
      <AddSheet><AddSheetIcon /></AddSheet>
      <HScrollArea>
        <Dots><GripDots color="#a8a8a8" /></Dots>
        <HButton><Arrow dir="l" color="#555" /></HButton>
        <HThumb />
        <HTrack />
        <HButton><Arrow dir="r" color="#555" /></HButton>
      </HScrollArea>
    </SheetTabs>

    <StatusBar>
      <MacroIcon />
      <StatusRight>
        <ViewButton $active><NormalViewIcon /></ViewButton>
        <ViewButton><PageViewIcon /></ViewButton>
        <ViewButton><BreakViewIcon /></ViewButton>
        <Slot $w={16}><ZoomMinus /></Slot>
        <ZoomSlider><ZoomThumb /><ZoomMark /></ZoomSlider>
        <Slot $w={12}><ZoomPlus /></Slot>
        <ZoomText>90%</ZoomText>
      </StatusRight>
    </StatusBar>
    <TaskStrip><TaskGap /></TaskStrip>
  </Window>
);

export default App;
